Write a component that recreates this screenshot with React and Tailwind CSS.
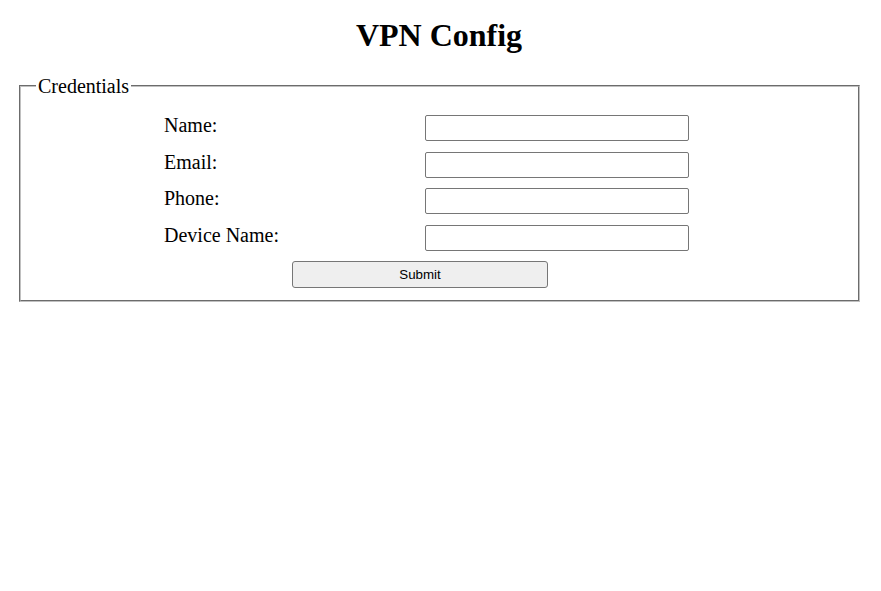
import React from "react";

function Row({ label }) {
  return (
    <>
      <label className="leading-[21px] text-[20px]">{label}</label>
      <input
        type="text"
        className="w-[264px] h-[26px] border border-[#767676] rounded-[2px] bg-white outline-none"
      />
    </>
  );
}

export default function App() {
  return (
    <div className="font-['Liberation_Serif','Times_New_Roman',serif] text-black bg-white min-h-[591px]">
      <h1 className="pt-[16.5px] pr-[3px] text-[32px] leading-[37px] font-bold text-center">VPN Config</h1>
      <form onSubmit={(e) => e.preventDefault()}>
        <fieldset className="mt-[21px] ml-[19px] mr-[21px] border-2 [border-style:groove] border-[#c0c0c0] px-[15px] pb-[12px] text-[20px]">
          <legend className="px-[2px] leading-[23px] text-[20px]">Credentials</legend>
          <div className="pt-[17.5px] ml-[128px] grid grid-cols-[261px_264px] gap-y-[10.67px]">
            <Row label="Name:" />
            <Row label="Email:" />
            <Row label="Phone:" />
            <Row label="Device Name:" />
          </div>
          <div className="mt-[10px] ml-[256px] flex">
            <button
              type="submit"
              className="block w-[256px] h-[27px] bg-[#efefef] border border-[#767676] rounded-[3px] font-['Liberation_Sans',Arial,sans-serif] text-[13.33px] leading-[15px] text-black"
            >
              Submit
            </button>
          </div>
        </fieldset>
      </form>
    </div>
  );
}
